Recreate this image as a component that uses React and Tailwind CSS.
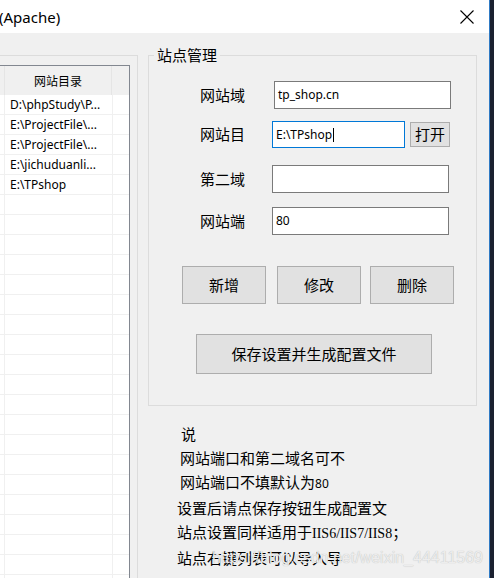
import React from "react";

const CJK = { fontFamily: '"Noto Sans CJK SC", "Noto Sans", sans-serif' };
const SANS = { fontFamily: '"Noto Sans", "Noto Sans CJK SC", sans-serif' };

const rows = [
  "D:\\phpStudy\\P...",
  "E:\\ProjectFile\\...",
  "E:\\ProjectFile\\...",
  "E:\\jichuduanli...",
  "E:\\TPshop",
];

function Row({ text }) {
  return (
    <div className="flex h-[20px] shrink-0 border-b border-[#f0f0f0]">
      <div className="w-[5px] border-r border-[#f0f0f0]" />
      <div
        className="w-[108px] border-r border-[#f0f0f0] pl-[5px] text-[12px] leading-[19px] text-black whitespace-nowrap overflow-hidden"
        style={SANS}
      >
        {text}
      </div>
      <div className="flex-1" />
    </div>
  );
}

function Btn({ children, className = "" }) {
  return (
    <div
      className={
        "flex items-center justify-center bg-[#e1e1e1] border border-[#adadad] text-[15px] text-black " +
        className
      }
      style={CJK}
    >
      {children}
    </div>
  );
}

export default function App() {
  const blanks = Array.from({ length: 22 });
  return (
    <div className="relative w-[494px] h-[578px] overflow-hidden flex bg-[#1b2130]">
      <div className="w-[490px] h-full flex flex-col border-r border-[#2f7ac4] bg-[#f0f0f0]">
        {/* title bar */}
        <div className="h-[33px] shrink-0 bg-white flex items-center justify-between">
          <div className="ml-[-1px] text-[15px] leading-[20px] text-black" style={SANS}>
            (Apache)
          </div>
          <svg width="14" height="14" viewBox="0 0 14 14" className="mr-[15px] mt-[1px]">
            <path d="M0.5 0.5 L13.5 13.5 M13.5 0.5 L0.5 13.5" stroke="#000" strokeWidth="1.1" fill="none" />
          </svg>
        </div>
        {/* body */}
        <div className="flex-1 flex">
          {/* left groupbox with list */}
          <div className="w-[138px] mt-[22px] border-t border-r border-[#dcdcdc] flex flex-col">
            <div className="mt-[9px] w-[130px] flex-1 bg-white border-t border-r border-[#828790] flex flex-col overflow-hidden">
              <div className="h-[29px] shrink-0 flex bg-[#f0f0f0]">
                <div className="w-[5px] border-r border-[#e5e5e5]" />
                <div
                  className="w-[107px] border-r border-[#e5e5e5] flex items-center justify-center text-[12px] text-black"
                  style={CJK}
                >
                  网站目录
                </div>
                <div className="flex-1" />
              </div>
              {rows.map((r, i) => (
                <Row key={i} text={r} />
              ))}
              {blanks.map((_, i) => (
                <Row key={"b" + i} text="" />
              ))}
            </div>
          </div>
          {/* right column */}
          <div className="ml-[10px] flex flex-col">
            <div className="relative mt-[22px] w-[329px] h-[351px] border border-[#dcdcdc] flex flex-col pt-[25px]">
              <div
                className="absolute left-[5px] top-[-11px] px-[3px] bg-[#f0f0f0] text-[15px] leading-[20px] text-black"
                style={CJK}
              >
                站点管理
              </div>
              {/* row 1 */}
              <div className="flex items-center h-[28px] pl-[51px]">
                <div className="w-[72px] text-[15px] text-black" style={CJK}>网站域</div>
                <div
                  className="ml-[2px] w-[177px] h-[28px] bg-white border border-[#7a7a7a] pl-[3px] flex items-center text-[12px] text-black"
                  style={SANS}
                >
                  tp_shop.cn
                </div>
              </div>
              {/* row 2 */}
              <div className="flex items-center h-[27px] mt-[12px] pl-[51px]">
                <div className="w-[72px] text-[15px] text-black" style={CJK}>网站目</div>
                <div
                  className="w-[133px] h-[27px] bg-white border border-[#0078d7] pl-[3px] flex items-center text-[12px] text-black"
                  style={SANS}
                >
                  E:\TPshop
                  <span className="ml-[1px] w-[1px] h-[14px] bg-black" />
                </div>
                <Btn className="ml-[5px] w-[40px] h-[25px]">打开</Btn>
              </div>
              {/* row 3 */}
              <div className="flex items-center h-[28px] mt-[17px] pl-[51px]">
                <div className="w-[72px] text-[15px] text-black" style={CJK}>第二域</div>
                <div className="w-[177px] h-[28px] bg-white border border-[#7a7a7a]" />
              </div>
              {/* row 4 */}
              <div className="flex items-center h-[28px] mt-[14px] pl-[51px]">
                <div className="w-[72px] text-[15px] text-black" style={CJK}>网站端</div>
                <div
                  className="w-[177px] h-[28px] bg-white border border-[#7a7a7a] pl-[3px] flex items-center text-[12px] text-black"
                  style={SANS}
                >
                  80
                </div>
              </div>
              {/* buttons */}
              <div className="flex mt-[31px] pl-[33px]">
                <Btn className="w-[84px] h-[38px]">新增</Btn>
                <Btn className="ml-[11px] w-[84px] h-[38px]">修改</Btn>
                <Btn className="ml-[9px] w-[84px] h-[38px]">删除</Btn>
              </div>
              <div className="flex mt-[30px] pl-[47px]">
                <Btn className="w-[236px] h-[40px]">保存设置并生成配置文件</Btn>
              </div>
            </div>
            {/* notes */}
            <div className="mt-[16px] pl-[29px] flex flex-col text-[15px] leading-[24px] text-black whitespace-nowrap" style={CJK}>
              <div className="pl-[4px]">说</div>
              <div className="pl-[3px]">网站端口和第二域名可不</div>
              <div className="pl-[3px]">
                网站端口不填默认为<span className="text-[12px]" style={SANS}>80</span>
              </div>
              <div>设置后请点保存按钮生成配置文</div>
              <div>
                站点设置同样适用于
                <span className="text-[14px]" style={{ fontFamily: '"Liberation Serif", serif' }}>
                  IIS6/IIS7/IIS8
                </span>
                ；
              </div>
              <div>站点右键列表可以导入导</div>
            </div>
          </div>
        </div>
      </div>
      {/* watermark overlay */}
      <div
        className="absolute left-[212px] top-[549px] text-[16px] leading-[18px] text-[#ededed] whitespace-nowrap"
        style={{ fontFamily: '"Liberation Sans", sans-serif', textShadow: "0 0 1px rgba(0,0,0,0.25)" }}
      >
        https://blog.csdn.net/weixin_44411569
      </div>
    </div>
  );
}
